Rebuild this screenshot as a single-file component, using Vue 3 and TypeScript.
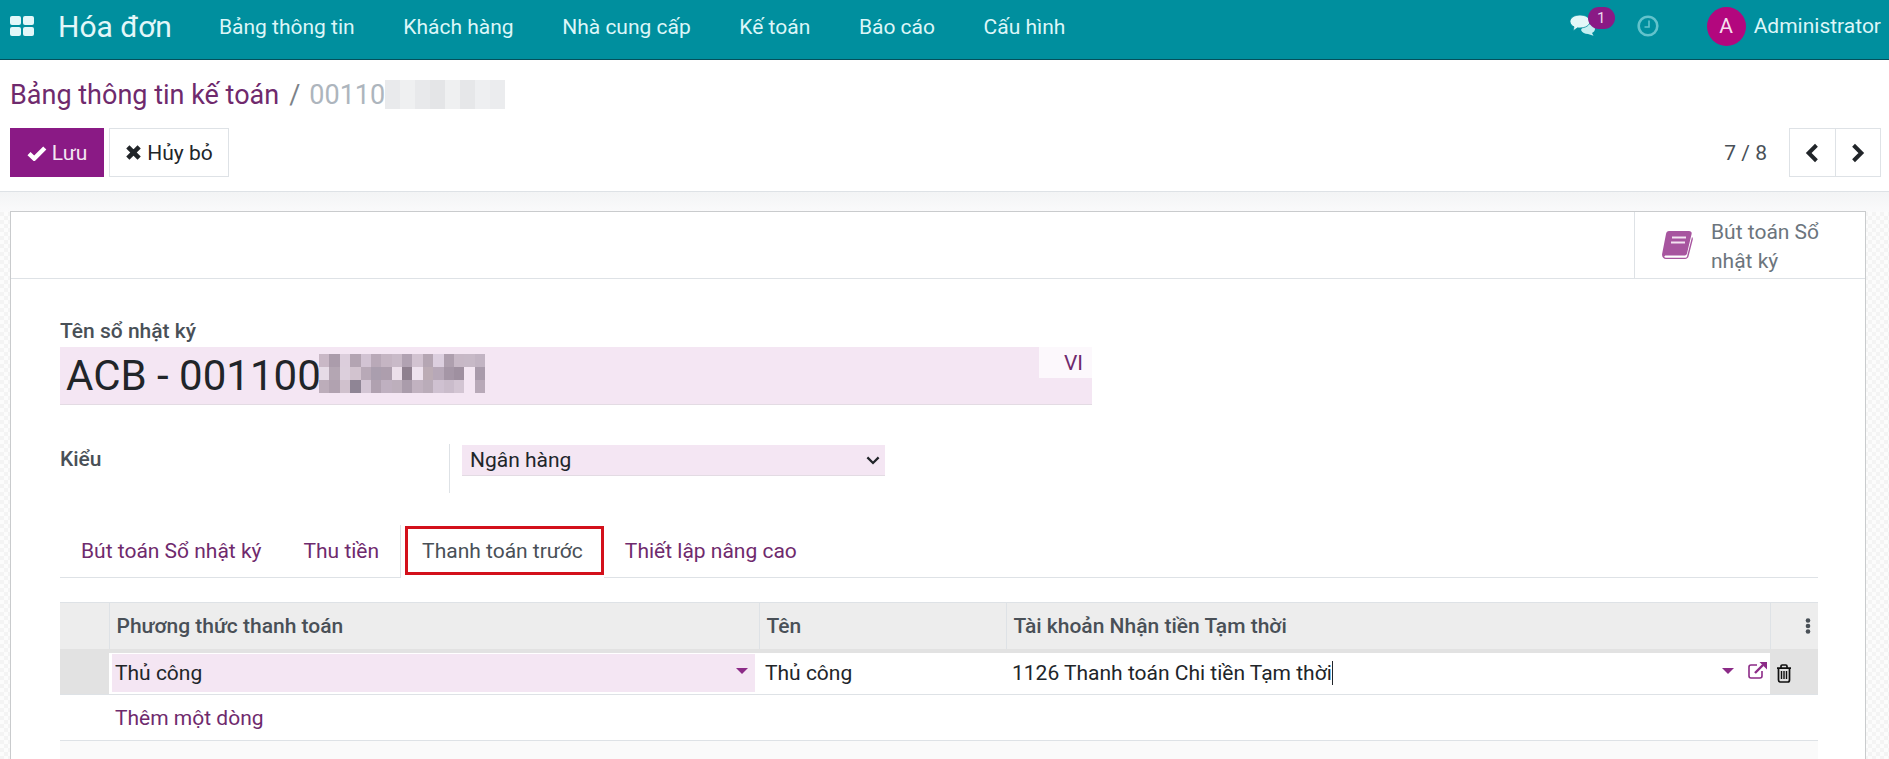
<script setup lang="ts">
const menus: string[] = ['Bảng thông tin', 'Khách hàng', 'Nhà cung cấp', 'Kế toán', 'Báo cáo', 'Cấu hình']
const tabs = [
  { label: 'Bút toán Sổ nhật ký', active: false },
  { label: 'Thu tiền', active: false },
  { label: 'Thanh toán trước', active: true },
  { label: 'Thiết lập nâng cao', active: false },
]
const mosaicRows: string[] = [
  'c9b8c6 ab9cab dccedc b3a4b2 d2c3d3 b9a9b8 c5b5c3 c9bac8 b1a2b2 d2c3d1 b5a6b3 dccfdf ae9fae c7b8c6 c7b9c7 c2b4c3',
  'e6dbe6 b4a6b3 dccfdc d2c3cf b8a9b7 aa9eae ad9ead ecdfea 8f808f eee2ee bcacb5 b7a8b8 a596a6 9f90a0 f4e7f3 a99bab',
  'bcadba b1a2b0 d0c1cd 8f8595 d3c5d4 b0a1b0 bfb0c0 bdafbc aa9cab c1b2c0 baacb9 cfc1d1 cabccb d3c5d3 f4e6f3 b8a9b8',
]
const mosaic = mosaicRows.flatMap((row, y) =>
  row.split(' ').map((hex, x) => ({ key: `${x}-${y}`, x, y, fill: `#${hex}` })),
)
const crumbCells: string[] = ['e9eaec', 'eff0f1', 'e8e9eb', 'e4e5e7', 'eff0f1', 'e6e7e9', 'eeeff1', 'ebecee']
</script>

<template>
  <div class="page">
    <header class="nav">
      <svg class="apps" width="24" height="20" viewBox="0 0 24 20" aria-hidden="true">
        <rect x="0" y="0" width="11" height="9" rx="2" />
        <rect x="13" y="0" width="11" height="9" rx="2" />
        <rect x="0" y="11" width="11" height="9" rx="2" />
        <rect x="13" y="11" width="11" height="9" rx="2" />
      </svg>
      <span class="brand">Hóa đơn</span>
      <nav class="menu">
        <a v-for="m in menus" :key="m">{{ m }}</a>
      </nav>
      <div class="systray">
        <div class="chat">
          <svg width="26" height="21" viewBox="0 0 26 21" aria-hidden="true">
            <path d="M14 9h3c4 0 8 2 8 5 0 2-1.500 3.300-3 4l1.500 2.800L18 19c-3 0-6-1.500-7-4z" fill="#c5eef1" />
            <path d="M10 0c5.500 0 10 2.800 10 6.500S15.500 13 10 13c-.8 0-1.600 0-2.400-.2L3 16l1-4.200C1.600 10.700 0 8.700 0 6.500 0 2.800 4.500 0 10 0z" fill="#e3f7f8" stroke="#008f9e" stroke-width=".8" />
          </svg>
          <span class="badge">1</span>
        </div>
        <svg class="clock" width="22" height="22" viewBox="0 0 22 22" aria-hidden="true">
          <circle cx="11" cy="11" r="9.300" fill="none" stroke="#62c3cc" stroke-width="2.600" />
          <path d="M12 5.500V12H7.500" fill="none" stroke="#62c3cc" stroke-width="1.600" />
        </svg>
        <span class="avatar">A</span>
        <span class="user">Administrator</span>
      </div>
    </header>

    <section class="panel">
      <div class="crumbs">
        <a class="crumb">Bảng thông tin kế toán</a>
        <span class="slash">/</span>
        <span class="current">00110</span>
        <span class="crumb-blur">
          <i v-for="(c, i) in crumbCells" :key="i" :style="{ background: '#' + c }"></i>
        </span>
      </div>
      <div class="actions">
        <div class="btns">
          <button class="btn primary">
            <svg width="20" height="16" viewBox="0 0 18 14" aria-hidden="true">
              <path d="M1.800 7.500 6.500 12 16 2.500" fill="none" stroke="#fff" stroke-width="4" />
            </svg>
            Lưu
          </button>
          <button class="btn ghost">
            <svg width="17" height="17" viewBox="0 0 15 15" aria-hidden="true">
              <path d="M2.500 2.500l10 10m0-10l-10 10" fill="none" stroke="#212529" stroke-width="4" />
            </svg>
            Hủy bỏ
          </button>
        </div>
        <div class="pager">
          <span class="count">7 / 8</span>
          <div class="pager-btns">
            <button aria-label="prev">
              <svg width="16" height="20" viewBox="0 0 14 18"><path d="M11 2 4 9l7 7" fill="none" stroke="#212529" stroke-width="3.600" /></svg>
            </button>
            <button aria-label="next">
              <svg width="16" height="20" viewBox="0 0 14 18"><path d="M3 2l7 7-7 7" fill="none" stroke="#212529" stroke-width="3.600" /></svg>
            </button>
          </div>
        </div>
      </div>
    </section>

    <main class="content">
      <div class="sheet">
        <div class="button-box">
          <div class="stat">
            <svg width="31" height="28" viewBox="0 0 31 28" aria-hidden="true">
              <path d="M7 0h20c2 0 3 1.300 2.600 3L25 22.500c-.3 1.300-1.300 2-2.600 2H4c-1.500 0-1.800 1-1.600 1.500.200.500.700.800 1.600.800h19c1 0 1.800-.4 2.100-1.600L30 6c.700.600 1 1.500.8 2.500L26.600 25c-.3 1.600-1.600 3-3.600 3H4c-2.500 0-4.300-2-3.900-5L4 3c.3-1.800 1.500-3 3-3z" fill="#a7559f" />
              <path d="M10 6.500h14M9 11.500h14" stroke="#f3e4f1" stroke-width="2.200" />
            </svg>
            <span class="stat-text">Bút toán Sổ<br />nhật ký</span>
          </div>
        </div>

        <div class="form">
          <label class="title-label">Tên sổ nhật ký</label>
          <div class="title-input">
            <span class="title-text">ACB - 001100</span>
            <svg class="mosaic" width="166" height="39" viewBox="0 0 16 3" preserveAspectRatio="none" shape-rendering="crispEdges" aria-hidden="true">
              <rect v-for="c in mosaic" :key="c.key" :x="c.x" :y="c.y" width="1.020" height="1.020" :fill="c.fill" />
            </svg>
            <span class="lang">VI</span>
          </div>

          <div class="type-row">
            <label class="type-label">Kiểu</label>
            <div class="type-cell">
              <div class="select">
                <span>Ngân hàng</span>
                <svg width="14" height="9" viewBox="0 0 12 8" aria-hidden="true"><path d="M1 1.200 6 6.200l5-5" fill="none" stroke="#212529" stroke-width="2" /></svg>
              </div>
            </div>
          </div>

          <div class="tabs">
            <a v-for="t in tabs" :key="t.label" class="tab" :class="{ active: t.active }">{{ t.label }}</a>
          </div>

          <table class="grid">
            <colgroup>
              <col class="c-handle" /><col class="c-method" /><col class="c-name" /><col class="c-account" /><col class="c-trash" />
            </colgroup>
            <thead>
              <tr>
                <th></th>
                <th>Phương thức thanh toán</th>
                <th>Tên</th>
                <th>Tài khoản Nhận tiền Tạm thời</th>
                <th class="dots-cell">
                  <svg width="6" height="16" viewBox="0 0 6 16" aria-hidden="true">
                    <circle cx="3" cy="2.500" r="2.300" /><circle cx="3" cy="8" r="2.300" /><circle cx="3" cy="13.500" r="2.300" />
                  </svg>
                </th>
              </tr>
            </thead>
            <tbody>
              <tr class="edit-row">
                <td class="handle"></td>
                <td class="method">
                  <div class="m2o pink">
                    <span>Thủ công</span>
                    <i class="caret"></i>
                  </div>
                </td>
                <td class="name">Thủ công</td>
                <td class="account">
                  <div class="m2o">
                    <span class="typed">1126 Thanh toán Chi tiền Tạm thời</span>
                    <i class="caret"></i>
                    <svg class="ext" width="19" height="17" viewBox="0 0 19 17" aria-hidden="true">
                      <path d="M9 3H3a2 2 0 0 0-2 2v9a2 2 0 0 0 2 2h9a2 2 0 0 0 2-2V9" fill="none" stroke="#8c2b87" stroke-width="1.600" />
                      <path d="M7 11l8-8" stroke="#8c2b87" stroke-width="2.400" />
                      <path d="M11.500 0H19v7.500z" fill="#8c2b87" />
                    </svg>
                  </div>
                </td>
                <td class="trash">
                  <svg width="16" height="19" viewBox="0 0 16 19" aria-hidden="true">
                    <path d="M1 4.200h14M5 4V2.200C5 1.500 5.500 1 6.200 1h3.600c.7 0 1.200.5 1.200 1.200V4M2.500 4.500V16c0 1 .8 2 1.800 2h7.400c1 0 1.800-1 1.800-2V4.500" fill="none" stroke="#111" stroke-width="1.700" />
                    <path d="M5.500 7v8M8 7v8M10.500 7v8" stroke="#111" stroke-width="1.400" />
                  </svg>
                </td>
              </tr>
              <tr class="add-row">
                <td></td>
                <td colspan="4"><a>Thêm một dòng</a></td>
              </tr>
            </tbody>
          </table>
          <div class="grid-foot"></div>
        </div>
      </div>
    </main>
  </div>
</template>

<style>
html, body { margin: 0; background: #fff; overflow: hidden; }
</style>

<style scoped>
.page {
  width: 1889px;
  height: 759px;
  overflow: hidden;
  display: flex;
  flex-direction: column;
  font-family: Roboto, "Noto Sans", sans-serif;
  font-size: 21px;
  color: #212529;
}
.nav {
  height: 59px;
  flex: none;
  box-sizing: content-box;
  display: flex;
  align-items: center;
  background: #008f9e;
  border-bottom: 1px solid #04505c;
  color: #dcf6f8;
  padding: 0 8px 0 10px;
}
.apps { fill: #e3f7f9; margin-bottom: 7px; flex: none; }
.brand { font-size: 30px; margin-left: 24px; width: 161px; flex: none; color: #e3f7f9; margin-bottom: 7px; }
.menu { display: flex; gap: 48.600px; font-size: 21px; margin-bottom: 6px; }
.systray { margin-left: auto; display: flex; align-items: center; margin-bottom: 7px; }
.chat { position: relative; width: 46px; height: 30px; display: flex; align-items: flex-end; }
.chat svg { margin-bottom: 5px; }
.badge {
  position: absolute;
  left: 18px;
  top: -4px;
  width: 27px;
  height: 22px;
  border-radius: 11px;
  background: #8a1a85;
  color: #eedcee;
  font-size: 15px;
  line-height: 22px;
  text-align: center;
}
.clock { margin-left: 21px; }
.avatar {
  width: 39px;
  height: 39px;
  border-radius: 50%;
  background: #b3077e;
  color: #f6dfee;
  margin-left: 48px;
  text-align: center;
  line-height: 39px;
  font-size: 21px;
}
.user { margin-left: 8px; font-size: 21px; }

.panel {
  flex: none;
  height: 132px;
  box-sizing: border-box;
  background: #fff;
  border-bottom: 1px solid #dee2e6;
  padding: 20px 8px 0 10px;
}
.crumbs { display: flex; align-items: center; height: 30px; font-size: 27px; white-space: nowrap; }
.crumb { color: #6f2a6d; }
.slash { color: #7c8288; margin: 0 9px 0 10px; }
.current { color: #adb5bd; }
.crumb-blur { display: flex; width: 120px; height: 29px; margin-top: -1px; }
.crumb-blur i { flex: 1; }
.actions { display: flex; justify-content: space-between; margin-top: 18px; }
.btns { display: flex; gap: 5px; }
.btn {
  height: 49px;
  box-sizing: border-box;
  font: inherit;
  font-size: 21px;
  padding: 0;
  display: flex;
  align-items: center;
  justify-content: center;
  gap: 5px;
  cursor: pointer;
}
.primary { width: 94px; background: #8a1a85; color: #f3e6f2; border: 0; }
.ghost { width: 120px; background: #fff; color: #212529; border: 1px solid #dee2e6; }
.pager { display: flex; align-items: center; gap: 22px; }
.count { color: #495057; font-size: 21px; }
.pager-btns { display: flex; width: 92px; height: 49px; box-sizing: border-box; border: 1px solid #dee2e6; }
.pager-btns button {
  flex: 1;
  background: #fff;
  border: 0;
  padding: 0;
  display: flex;
  align-items: center;
  justify-content: center;
}
.pager-btns button + button { border-left: 1px solid #dee2e6; }

.content {
  flex: 1;
  min-height: 0;
  padding: 19px 23px 0 10px;
  background:
    linear-gradient(#f3f4f5, #fafafb 20px, transparent 20px),
    repeating-conic-gradient(#f4f4f4 0 25%, #fcfcfc 0 50%) 0 0 / 8px 8px;
}
.sheet {
  height: 100%;
  box-sizing: border-box;
  background: #fff;
  border: 1px solid #c9cbcd;
  border-bottom: 0;
}
.button-box { height: 66px; border-bottom: 1px solid #dee2e6; display: flex; justify-content: flex-end; }
.stat {
  width: 231px;
  box-sizing: border-box;
  border-left: 1px solid #dee2e6;
  display: flex;
  align-items: center;
  padding-left: 27px;
  gap: 18px;
}
.stat-text { color: #6c757d; font-size: 21px; line-height: 29px; margin-top: 3px; white-space: nowrap; }

.form { padding: 41px 47px 0 49px; }
.title-label { display: block; font-weight: 500; color: #495057; font-size: 21px; line-height: 22px; }
.title-input {
  position: relative;
  margin-top: 5px;
  width: 1032px;
  height: 58px;
  box-sizing: border-box;
  background: #f4e6f3;
  border-bottom: 1px solid #e3dbe3;
  display: flex;
  align-items: center;
  padding-left: 6px;
}
.title-text { font-size: 42px; line-height: 54px; color: #212529; }
.mosaic { margin-left: -2px; margin-top: -4px; }
.lang {
  position: absolute;
  right: 0;
  top: 0;
  width: 53px;
  height: 31px;
  box-sizing: border-box;
  background: #fcf8fc;
  color: #6f2a6d;
  font-size: 21px;
  line-height: 32px;
  text-align: right;
  padding-right: 9px;
}
.type-row { display: flex; margin-top: 39px; height: 49px; }
.type-label { width: 389px; flex: none; font-weight: 500; color: #495057; font-size: 21px; line-height: 31px; }
.type-cell { border-left: 1px solid #dee2e6; padding-left: 12px; }
.select {
  width: 423px;
  height: 31px;
  box-sizing: border-box;
  background: #f4e6f3;
  border-bottom: 1px solid #e3dbe3;
  display: flex;
  align-items: center;
  justify-content: space-between;
  padding: 0 5px 0 8px;
  font-size: 21px;
  margin-top: 1px;
}
.tabs {
  display: flex;
  margin-top: 32px;
  height: 52px;
  border-bottom: 1px solid #dee2e6;
  box-sizing: content-box;
}
.tab {
  color: #6f2a6d;
  font-size: 21px;
  line-height: 53px;
  padding: 0 21px;
  box-sizing: border-box;
  white-space: nowrap;
}
.tab.active {
  position: relative;
  color: #495057;
  background: #fff;
  border-left: 1px solid #dee2e6;
  height: 53px;
  padding: 0 21px;
}
.tab.active::after {
  content: "";
  position: absolute;
  left: 4px;
  right: 0;
  top: 1px;
  bottom: 3px;
  border: 3px solid #d3101b;
  pointer-events: none;
}
.grid {
  width: 1758px;
  margin-top: 24px;
  border-collapse: collapse;
  table-layout: fixed;
  font-size: 21px;
}
.c-handle { width: 49px; }
.c-method { width: 650px; }
.c-name { width: 247px; }
.c-account { width: 764px; }
.c-trash { width: 48px; }
.grid th {
  height: 48px;
  padding: 0 0 0 7px;
  background: #ededed;
  border-top: 1px solid #dee2e6;
  border-bottom: 4px solid #e2e2e2;
  border-left: 1px solid #dee2e6;
  text-align: left;
  font-weight: 500;
  font-size: 21px;
  color: #495057;
  box-sizing: border-box;
}
.grid th:first-child { border-left: 0; }
.dots-cell { text-align: right !important; padding-right: 7px !important; }
.dots-cell svg { fill: #495057; display: block; margin-left: auto; }
.edit-row td { height: 44px; padding: 0; border-bottom: 1px solid #dee2e6; box-sizing: border-box; }
.handle, .trash { background: #e2e2e2; }
.method { padding: 0 4px 0 3px !important; }
.m2o { display: flex; align-items: center; height: 38px; box-sizing: border-box; padding-left: 3px; position: relative; }
.pink { background: #f4e6f3; }
.caret {
  width: 0;
  height: 0;
  border-left: 6px solid transparent;
  border-right: 6px solid transparent;
  border-top: 6px solid #8c2b87;
}
.method .caret { margin-left: auto; margin-right: 7px; margin-top: -4px; }
.name { padding-left: 6px !important; }
.account { padding-left: 6px !important; }
.account .m2o { padding-left: 0; }
.typed { border-right: 1.500px solid #212529; line-height: 24px; }
.account .caret { position: absolute; right: 36px; top: 14px; }
.ext { position: absolute; right: 3px; top: 8px; }
.trash svg { display: block; margin-left: 6px; }
.add-row td { height: 45px; padding: 0; border-bottom: 1px solid #dee2e6; }
.add-row a { color: #6f2a6d; padding-left: 6px; display: block; }
.grid-foot { height: 40px; background: #fafafa; width: 1758px; }
</style>
